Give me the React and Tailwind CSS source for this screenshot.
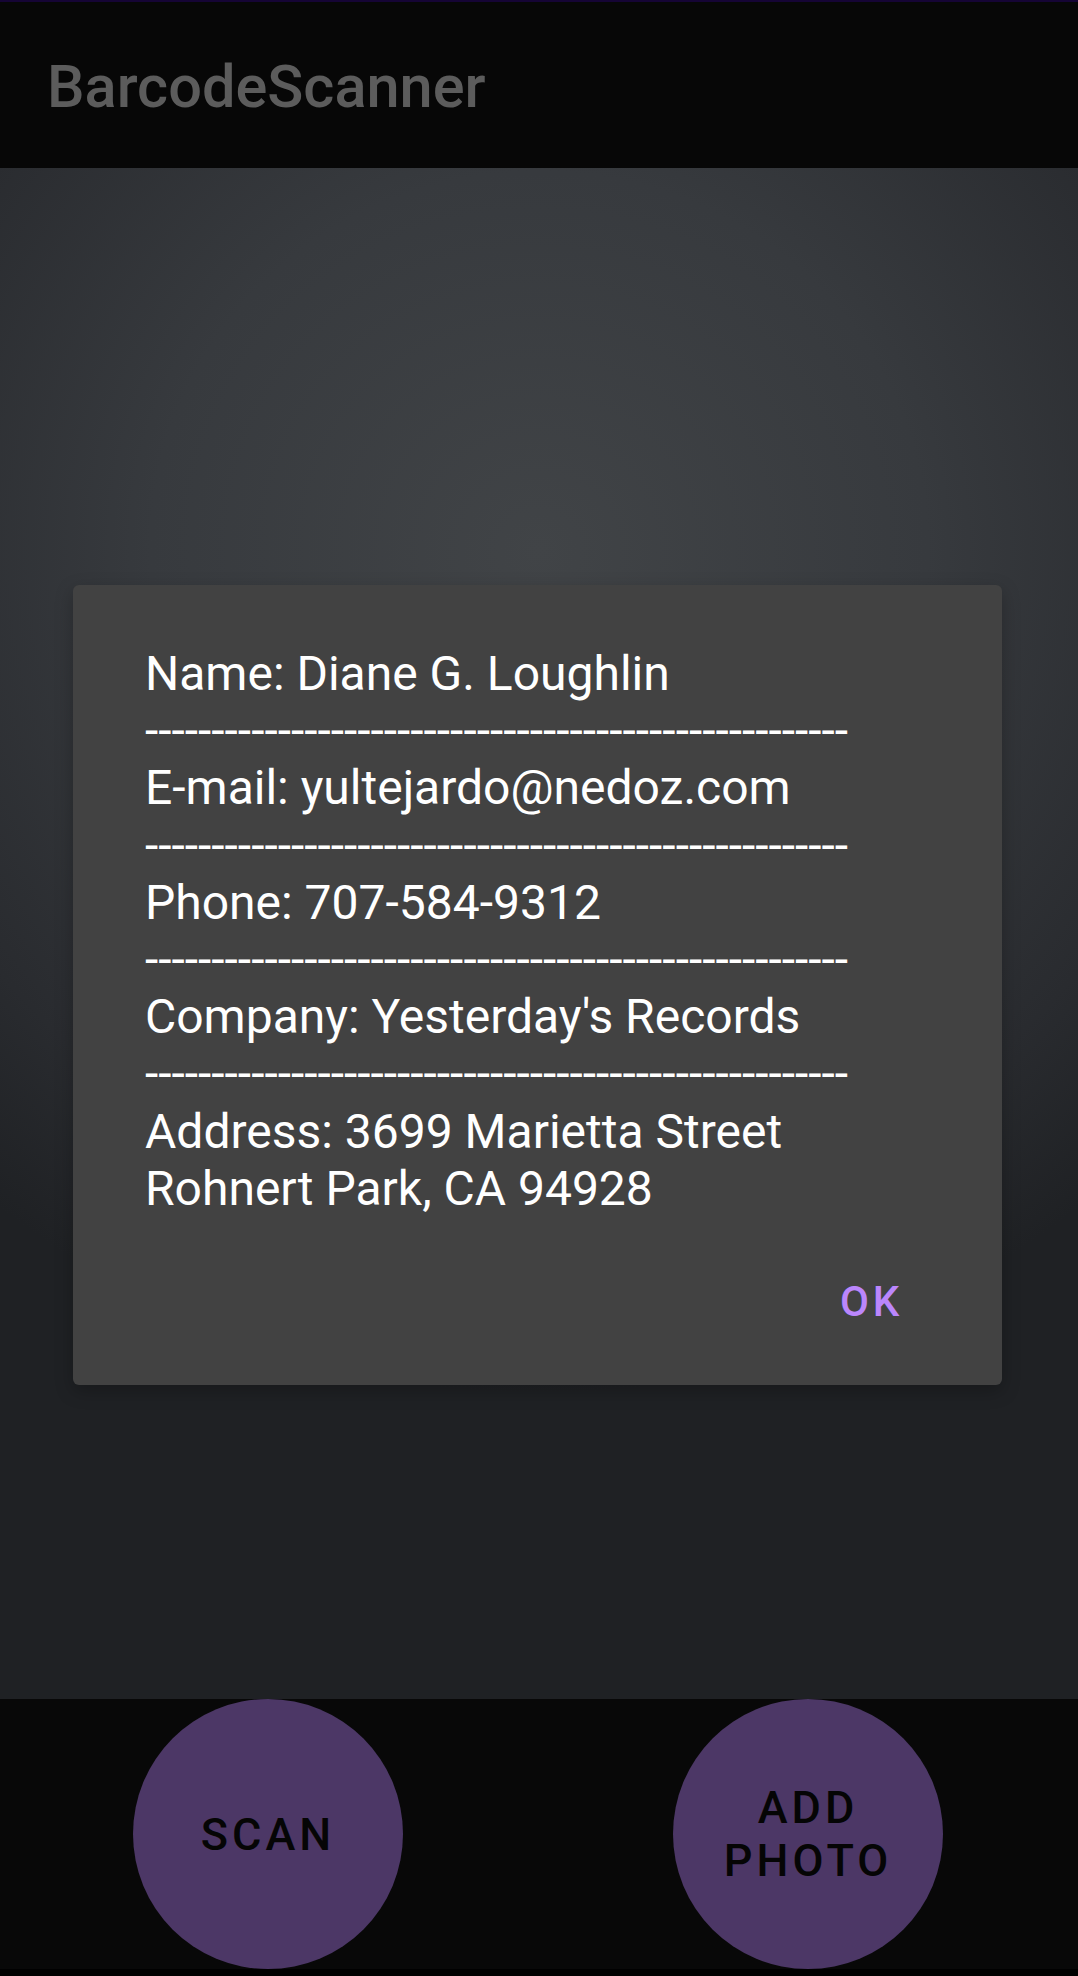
import React from 'react';

const rows = [
  'Name: Diane G. Loughlin',
  'E-mail: yultejardo@nedoz.com',
  'Phone: 707-584-9312',
  "Company: Yesterday's Records",
];

const dashes = '-'.repeat(53);

function RoundButton({ children }) {
  return (
    <button className="w-[270px] h-[270px] rounded-full bg-[#4c3766] flex items-center justify-center text-center text-[45px] leading-[53px] font-medium tracking-[0.09em] text-[#050505]">
      {children}
    </button>
  );
}

export default function App() {
  return (
    <div className="relative w-full h-[1976px] flex flex-col overflow-hidden font-['Roboto','Liberation_Sans',sans-serif]">
      {/* app bar */}
      <div className="h-[168px] shrink-0 bg-[#070707] flex flex-col">
        <div className="h-[2px] bg-[#150435]" />
        <div className="flex-1 flex items-center pl-[47px] pt-[6px]">
          <h1 className="text-[59.5px] font-medium text-[#5c5c5c] leading-none">BarcodeScanner</h1>
        </div>
      </div>

      {/* camera / preview area */}
      <div className="flex-1 bg-[#2a2d31] bg-[radial-gradient(ellipse_80%_55%_at_50%_25%,#414447_0%,#373a3e_45%,#292b2f_80%,#1f2124_100%)]" />

      {/* bottom buttons */}
      <div className="h-[277px] shrink-0 bg-[#080808] flex flex-col">
        <div className="flex items-start pl-[133px] gap-[270px]">
          <RoundButton>SCAN</RoundButton>
          <RoundButton>
            ADD
            <br />
            PHOTO
          </RoundButton>
        </div>
        <div className="mt-auto h-[8px] bg-black" />
      </div>

      {/* result dialog */}
      <div className="absolute inset-x-0 top-0 h-[1970px] flex items-center justify-center pr-[3px]">
        <div className="w-[929px] h-[800px] bg-[#424242] rounded-[6px] shadow-[0_6px_18px_rgba(0,0,0,0.25)] flex flex-col pl-[72px] pt-[60px]">
          <div className="text-white text-[48px] leading-[57.2px]">
            {rows.map((r) => (
              <React.Fragment key={r}>
                <div>{r}</div>
                <div className="whitespace-nowrap">{dashes}</div>
              </React.Fragment>
            ))}
            <div>Address: 3699 Marietta Street</div>
            <div>Rohnert Park, CA 94928</div>
          </div>
          <div className="flex justify-end pr-[99px] mt-[60px]">
            <button className="text-[42px] leading-[49px] font-medium tracking-[0.09em] text-[#bb86fc]">OK</button>
          </div>
        </div>
      </div>
    </div>
  );
}
